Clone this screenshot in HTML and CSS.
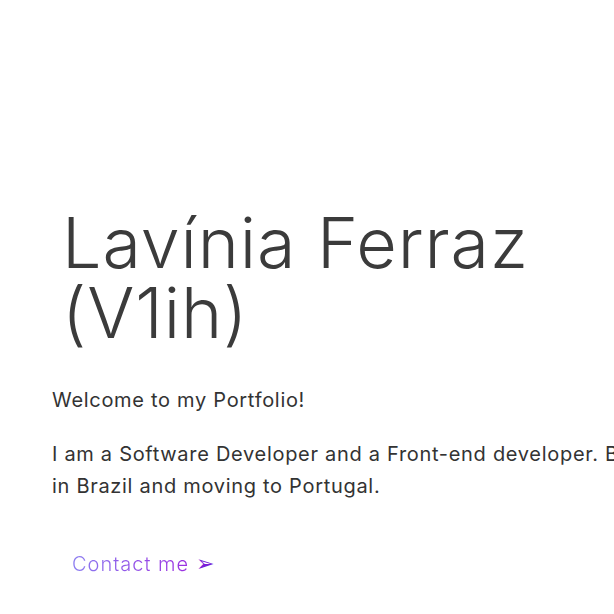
FILE: index.html
```html
<!DOCTYPE html>
<html lang="en">
<head>
    <meta charset="UTF-8">
    <meta name="viewport" content="width=device-width, initial-scale=1.0">
    <title>Vlih | Portfolio</title>
    <link rel="stylesheet" href="styles.css">
</head>
<body>
    <main class="home">
        <h1 class="home-title">Lavínia Ferraz (V1ih)</h1>
        <div class="home-text">
            <p>Welcome to my Portfolio!</p>
            <p>I am a Software Developer and a Front-end developer. Based in Brazil and moving to Portugal.</p>
        </div>
        <a class="contact-btn" href="#contact"><span class="contact-label">Contact me</span> <span class="contact-arrow">&#10146;</span></a>
    </main>
</body>
</html>
```

FILE: styles.css
```css
html {
    overflow-x: hidden;
}

body {
    margin: 0;
    background: #fff;
    font-family: "Inter", "Open Sans", sans-serif;
    color: #3b3b3b;
}

.home {
    padding: 208px 0 0 52px;
    width: 660px;
}

.home-title {
    margin: 0 0 36px 0;
    padding-left: 10px;
    width: 510px;
    font-size: 70px;
    font-weight: 300;
    line-height: 70px;
    letter-spacing: 0.9px;
    color: #3b3b3b;
}

.home-text {
    width: 618px;
}

.home-text p {
    margin: 0 0 22px 0;
    font-size: 20px;
    font-weight: 400;
    line-height: 32px;
    letter-spacing: 0.7px;
    color: #333;
}

.contact-btn {
    display: inline-block;
    margin: 26px 0 0 20px;
    font-size: 20px;
    font-weight: 300;
    letter-spacing: 1px;
    text-decoration: none;
}

.contact-label {
    background: linear-gradient(90deg, #8a7cf0, #9b2fe0);
    -webkit-background-clip: text;
    background-clip: text;
    color: transparent;
}

.contact-arrow {
    font-size: 22px;
    color: #7a1fd8;
}
```
